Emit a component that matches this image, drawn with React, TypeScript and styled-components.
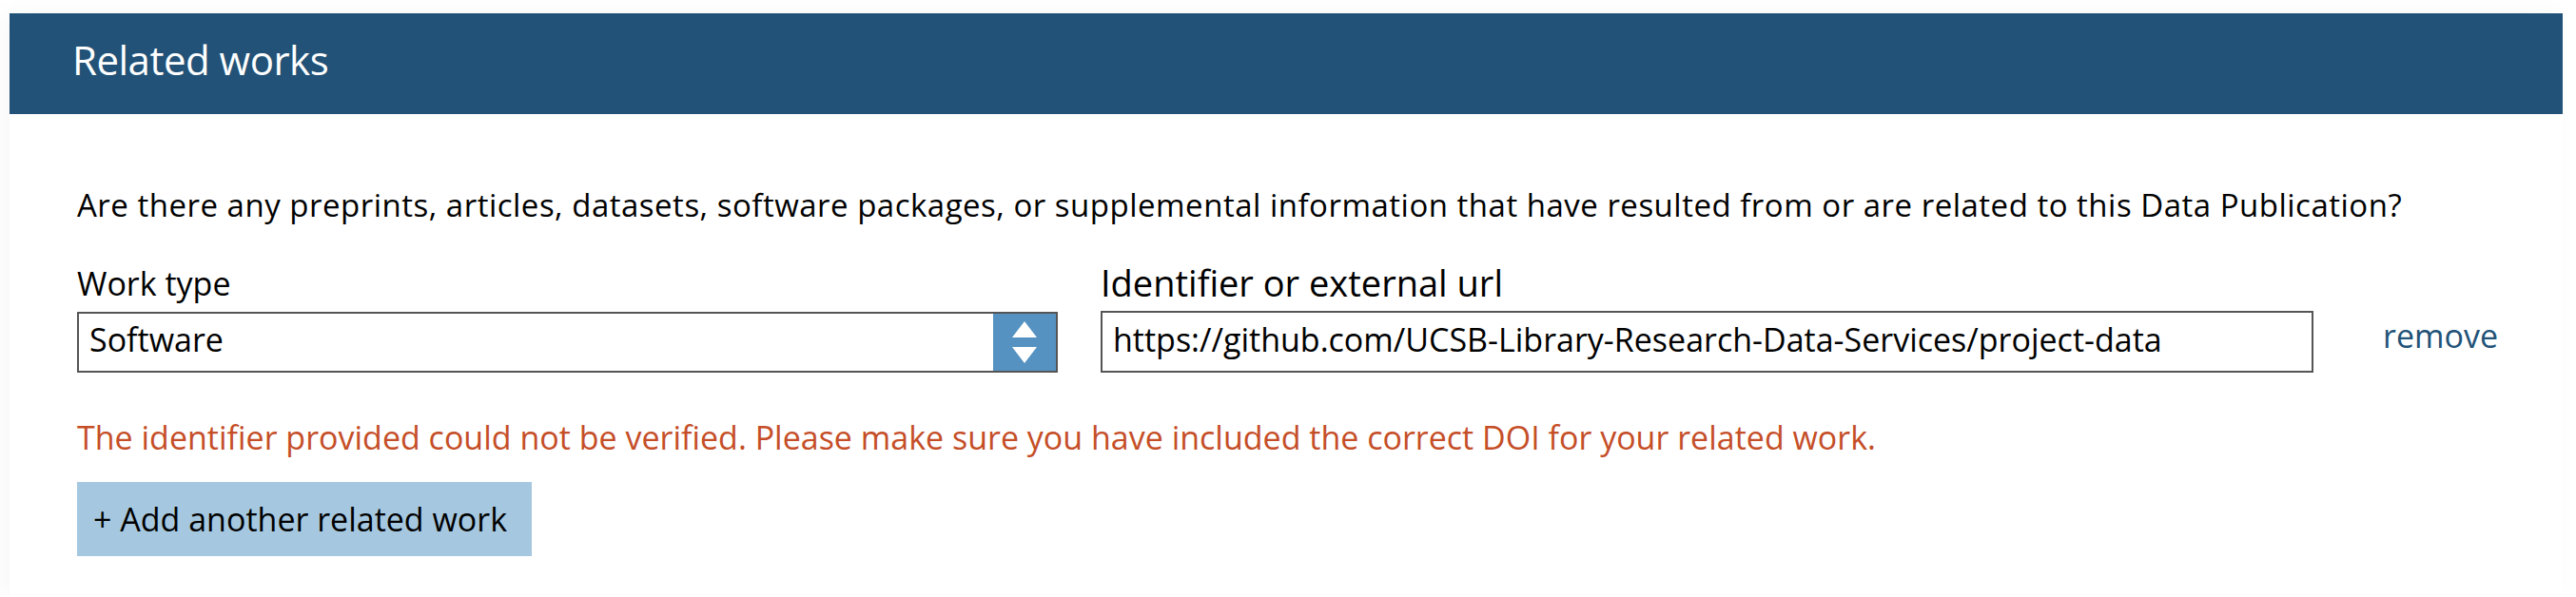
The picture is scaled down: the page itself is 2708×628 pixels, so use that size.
import React from "react";
import styled, { createGlobalStyle } from "styled-components";

const Global = createGlobalStyle`
  html, body { margin: 0; padding: 0; background: #ffffff; }
  body { font-family: "Open Sans", "Noto Sans", sans-serif; color: #000; }
  * { box-sizing: border-box; }
`;

const Page = styled.div`
  padding: 14px 14px 0 10px;
`;

const Panel = styled.section`
  background: #fff;
  box-shadow: -6px 0 24px rgba(0, 0, 0, 0.035);
  padding-bottom: 42px;
`;

const Header = styled.h2`
  margin: 0;
  height: 106px;
  display: flex;
  align-items: center;
  padding: 0 0 9px 66px;
  background: #225277;
  color: #fff;
  font-family: "Open Sans", sans-serif;
  font-weight: 400;
  font-size: 42px;
  letter-spacing: -0.5px;
`;

const Body = styled.div`
  padding: 0 0 0 71px;
  display: flex;
  flex-direction: column;
`;

const Intro = styled.p`
  margin: 76px 0 0 0;
  font-size: 33px;
  line-height: 40px;
  letter-spacing: 0.5px;
`;

const FieldRow = styled.div`
  margin-top: 39px;
  display: grid;
  grid-template-columns: 1031px 1275px auto;
  column-gap: 45px;
  align-items: end;
`;

const Field = styled.div`
  display: flex;
  flex-direction: column;
`;

const Label = styled.label<{ $size: number }>`
  font-size: ${(p) => p.$size}px;
  line-height: 44px;
  margin-bottom: 8px;
`;

const SelectBox = styled.div`
  height: 64px;
  border: 2px solid #555;
  display: flex;
  align-items: stretch;
  background: #fff;
`;

const SelectValue = styled.span`
  flex: 1;
  display: flex;
  align-items: center;
  padding: 0 0 6px 11px;
  font-size: 34px;
`;

const ArrowBlock = styled.span`
  width: 66px;
  background: #5592c1;
  display: flex;
  align-items: center;
  justify-content: center;
`;

const TextInput = styled.div`
  height: 65px;
  border: 2px solid #555;
  display: flex;
  align-items: center;
  padding: 0 0 6px 11px;
  font-size: 34px;
  white-space: nowrap;
  overflow: hidden;
`;

const RemoveCell = styled.div`
  height: 65px;
  display: flex;
  align-items: center;
  padding: 0 0 14px 28px;
`;

const RemoveLink = styled.a`
  color: #225277;
  font-size: 34px;
  text-decoration: none;
`;

const ErrorText = styled.p`
  margin: 46px 0 0 0;
  color: #c54e27;
  font-size: 34px;
  line-height: 44px;
`;

const AddButton = styled.button`
  margin-top: 25px;
  align-self: flex-start;
  height: 78px;
  width: 478px;
  border: none;
  background: #a5c8e0;
  color: #000;
  font-family: "Open Sans", sans-serif;
  font-size: 34px;
  text-align: left;
  padding: 0 0 0 17px;
`;

const Arrows = () => (
  <svg width="26" height="44" viewBox="0 0 26 44" aria-hidden="true">
    <polygon points="13,0 26,17 0,17" fill="#fff" />
    <polygon points="0,27 26,27 13,44" fill="#fff" />
  </svg>
);

export default function App() {
  return (
    <>
      <Global />
      <Page>
        <Panel>
          <Header>Related works</Header>
          <Body>
            <Intro>
              Are there any preprints, articles, datasets, software packages, or supplemental information that have resulted from or are related to this Data Publication?
            </Intro>
            <FieldRow>
              <Field>
                <Label $size={34}>Work type</Label>
                <SelectBox>
                  <SelectValue>Software</SelectValue>
                  <ArrowBlock>
                    <Arrows />
                  </ArrowBlock>
                </SelectBox>
              </Field>
              <Field>
                <Label $size={38}>Identifier or external url</Label>
                <TextInput>https://github.com/UCSB-Library-Research-Data-Services/project-data</TextInput>
              </Field>
              <RemoveCell>
                <RemoveLink href="#">remove</RemoveLink>
              </RemoveCell>
            </FieldRow>
            <ErrorText>
              The identifier provided could not be verified. Please make sure you have included the correct DOI for your related work.
            </ErrorText>
            <AddButton>+ Add another related work</AddButton>
          </Body>
        </Panel>
      </Page>
    </>
  );
}
